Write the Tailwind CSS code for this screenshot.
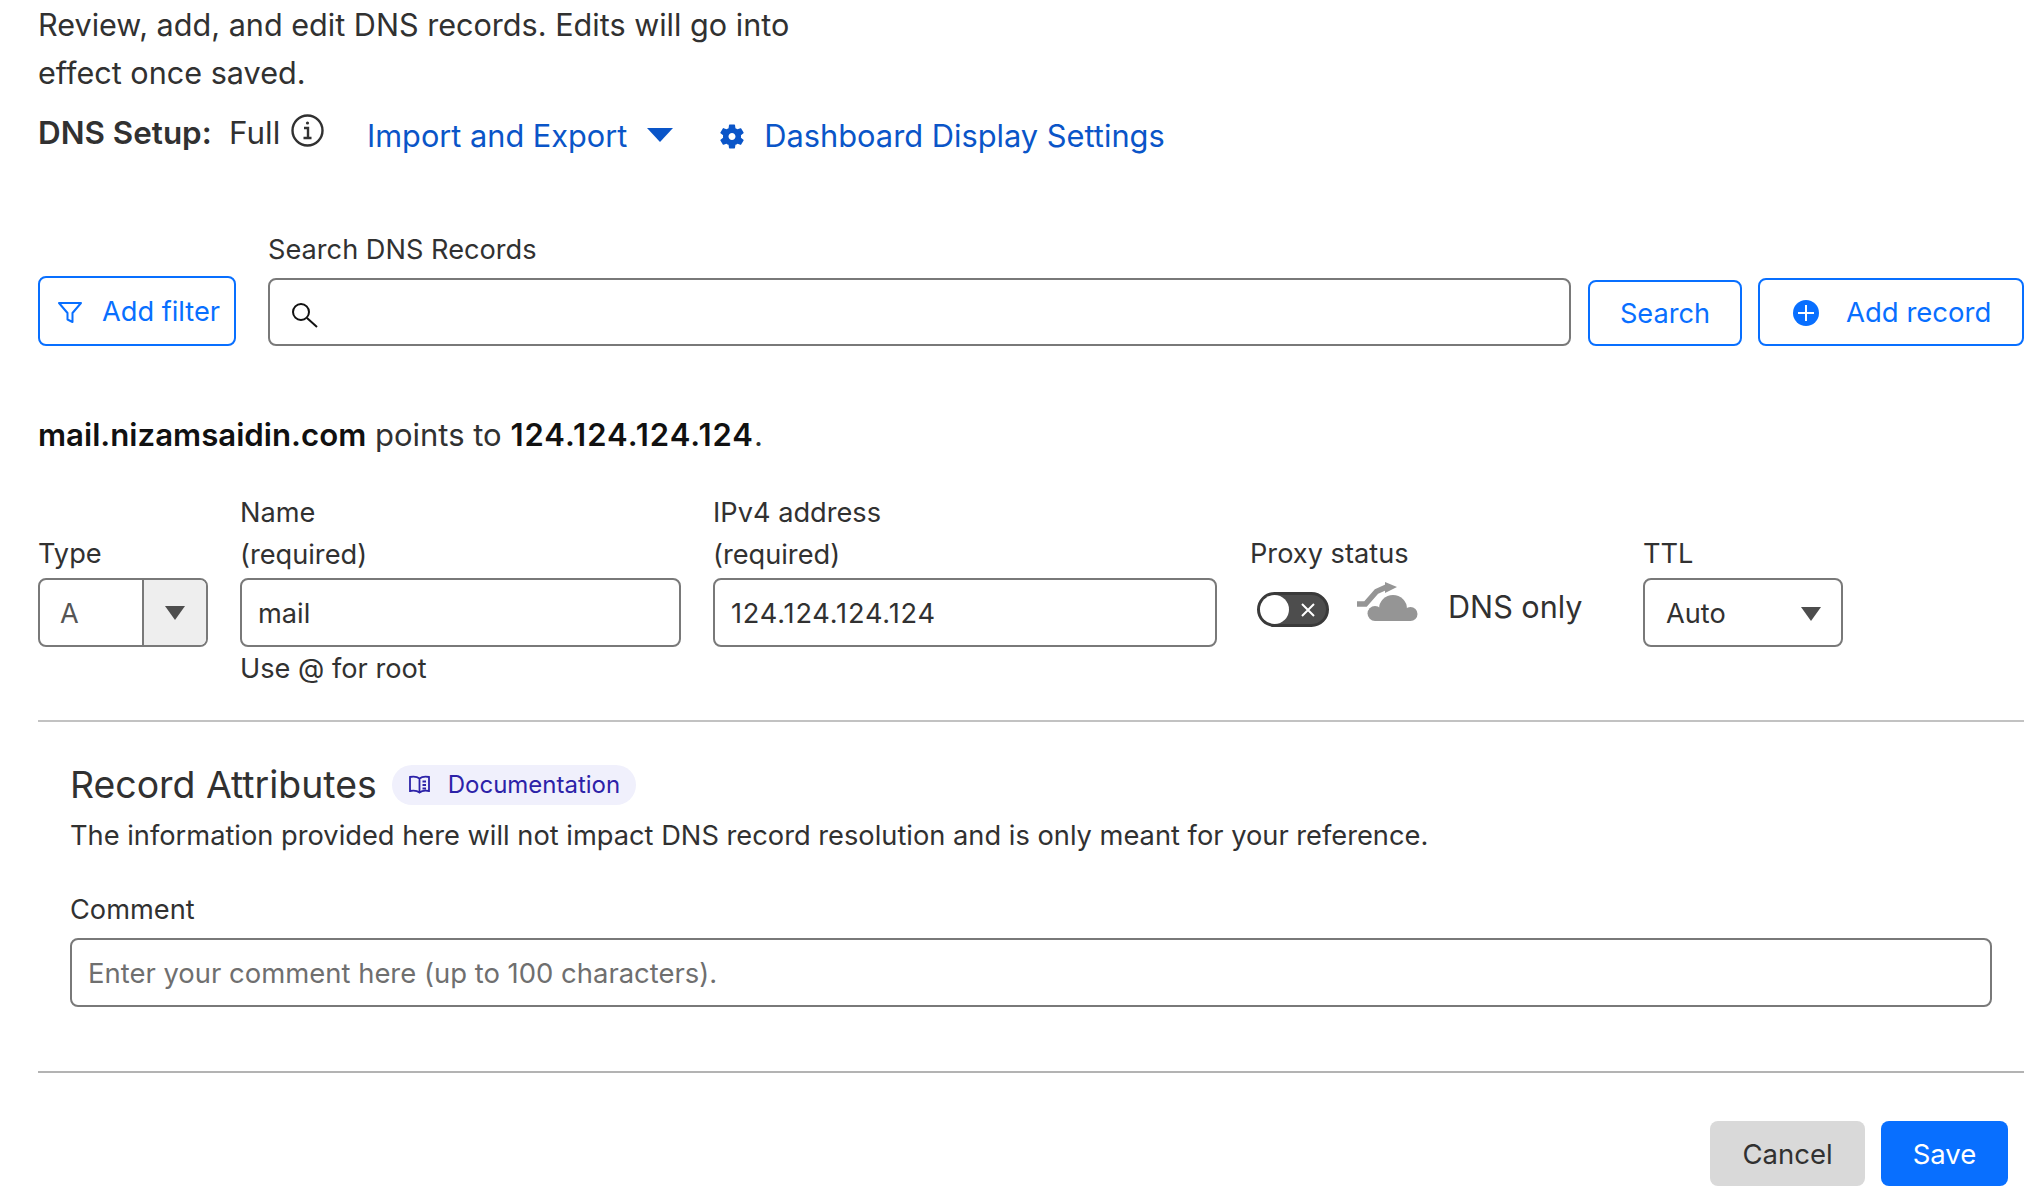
<!DOCTYPE html>
<html lang="en">
<head>
  <meta charset="UTF-8" />
  <title>DNS Records</title>
  <script src="https://cdn.jsdelivr.net/npm/@tailwindcss/browser@4"></script>
</head>
<body class="bg-white font-[Inter,sans-serif] text-[#313131] overflow-hidden">
  <main class="ml-[38px] w-[1986px] pt-px">

    <!-- Intro -->
    <p class="w-[800px] text-[30.6px] leading-[48px]">Review, add, and edit DNS records. Edits will go into<br />effect once saved.</p>

    <!-- DNS setup line -->
    <div class="mt-[11px] h-14 flex items-center">
      <span class="w-[191px] pb-1 text-[31.4px] font-semibold">DNS Setup:</span>
      <span class="w-[62px] pb-1 text-[31.4px]">Full</span>
      <svg class="w-[33px] h-[33px] mb-[12px]" viewBox="0 0 33 33" fill="none" stroke="#313131" stroke-width="2.4">
        <circle cx="16.5" cy="16.5" r="15" />
        <path d="M13 14h4v10M12.5 24h8" />
        <circle cx="16.5" cy="9" r="1.6" fill="#313131" stroke="none" />
      </svg>
      <a class="ml-[43px] text-[30.7px] text-[#0a55c8]">Import and Export</a>
      <svg class="ml-5 w-[26px] h-[14px] mb-[2px]" viewBox="0 0 26 14"><path d="M0 0h26L13 14z" fill="#0a55c8" /></svg>
      <svg class="ml-[47px] w-6 h-[25px]" viewBox="2.400 2 19.200 20" preserveAspectRatio="none" fill="#0a55c8"><path d="M19.14 12.94c.04-.3.06-.61.06-.94 0-.32-.02-.64-.07-.94l2.03-1.58c.18-.14.23-.41.12-.61l-1.92-3.32c-.12-.22-.37-.29-.59-.22l-2.39.96c-.5-.38-1.03-.7-1.62-.94l-.36-2.54c-.04-.24-.24-.41-.48-.41h-3.84c-.24 0-.43.17-.47.41l-.36 2.54c-.59.24-1.13.57-1.62.94l-2.39-.96c-.22-.08-.47 0-.59.22L2.74 8.87c-.12.21-.08.47.12.61l2.03 1.58c-.05.3-.09.63-.09.94s.02.64.07.94l-2.03 1.58c-.18.14-.23.41-.12.61l1.92 3.32c.12.22.37.29.59.22l2.39-.96c.5.38 1.03.7 1.62.94l.36 2.54c.05.24.24.41.48.41h3.84c.24 0 .44-.17.47-.41l.36-2.54c.59-.24 1.13-.56 1.62-.94l2.39.96c.22.08.47 0 .59-.22l1.92-3.32c.12-.22.07-.47-.12-.61l-2.01-1.58zM12 14.800c-1.540 0-2.800-1.260-2.800-2.800s1.260-2.800 2.800-2.800 2.800 1.260 2.800 2.800-1.260 2.800-2.800 2.800z" /></svg>
      <a class="ml-5 text-[30.8px] text-[#0a55c8]">Dashboard Display Settings</a>
    </div>

    <!-- Search row -->
    <div class="mt-[68px] flex items-end">
      <button class="w-[198px] h-[70px] flex items-center pl-[18px] pt-[3px] border-2 border-[#086fff] rounded-lg text-[27.2px] text-[#086fff]">
        <svg class="w-6 h-[22px] mr-5" viewBox="0 0 24 22" fill="none" stroke="#086fff" stroke-width="2" stroke-linejoin="round"><path d="M1 1h22l-8.500 10v9l-5-2.500v-6.500z" /></svg>
        Add filter
      </button>
      <div class="ml-8 w-[1303px]">
        <label class="block text-[27.2px] leading-9 mb-[10px]">Search DNS Records</label>
        <div class="h-[68px] flex items-center pl-[20px] border-2 border-[#797979] rounded-lg">
          <svg class="w-[28px] h-[28px] mt-[5px]" viewBox="0 0 28 28" fill="none" stroke="#111" stroke-width="2"><circle cx="11" cy="11" r="8" /><path d="M17 17l10 9" /></svg>
        </div>
      </div>
      <button class="ml-[17px] w-[154px] h-[66px] pt-[3px] border-2 border-[#086fff] rounded-lg text-[27.2px] text-[#086fff]">Search</button>
      <button class="ml-4 w-[266px] h-[68px] flex items-center pl-[33px] pt-[2px] border-2 border-[#086fff] rounded-lg text-[27.5px] text-[#086fff]">
        <svg class="w-[26px] h-[26px] mr-[27px]" viewBox="0 0 26 26"><circle cx="13" cy="13" r="13" fill="#086fff" /><path d="M13 5v16M5 13h16" stroke="#fff" stroke-width="2" /></svg>
        Add record
      </button>
    </div>

    <!-- Summary -->
    <p class="mt-[69px] text-[31px] leading-10"><strong class="text-[31.2px] font-semibold text-[#111]">mail.nizamsaidin.com</strong> points to <strong class="font-semibold text-[#111] tracking-[1px]">124.124.124.124</strong>.</p>

    <!-- Record form -->
    <div class="mt-[37px] flex items-start">
      <div class="w-[170px] pt-[41px]">
        <label class="block text-[27.2px] leading-[42px] mb-[3px]">Type</label>
        <div class="h-[69px] flex border-2 border-[#797979] rounded-lg overflow-hidden text-[27.2px]">
          <span class="w-[102px] pl-[20px] pt-[3px] flex items-center text-[#555]">A</span>
          <span class="flex-1 flex items-center justify-center bg-[#eeeeee] border-l-2 border-[#797979]">
            <svg class="w-5 h-[14px]" viewBox="0 0 20 14"><path d="M0 0h20L10 14z" fill="#4d4d4d" /></svg>
          </span>
        </div>
      </div>
      <div class="ml-8 w-[441px]">
        <label class="block text-[27.2px] leading-[41px] mb-1">Name<br /><span class="relative top-px">(required)</span></label>
        <input class="w-full h-[69px] px-[16px] pt-[2px] border-2 border-[#797979] rounded-lg text-[27.2px] text-[#313131]" value="mail" />
        <p class="mt-1 text-[27.2px] leading-9">Use @ for root</p>
      </div>
      <div class="ml-8 w-[504px]">
        <label class="block text-[27.2px] leading-[41px] mb-1">IPv4 address<br /><span class="relative top-px">(required)</span></label>
        <input class="w-full h-[69px] px-[16px] pt-[2px] border-2 border-[#797979] rounded-lg text-[27.2px] text-[#313131] tracking-[0.8px]" value="124.124.124.124" />
      </div>
      <div class="ml-[33px] w-[393px] pt-[41px]">
        <label class="block text-[27.2px] leading-[42px] mb-[3px]">Proxy status</label>
        <div class="h-[69px] flex items-start">
          <div class="ml-[7px] mt-[14px] w-[72px] h-[35px] flex items-center justify-between pl-[3px] pr-[11px] rounded-full bg-[#4d4d4d] border-[3px] border-[#3a3a3a]">
            <span class="-ml-[3px] w-[29px] h-[29px] rounded-full bg-white"></span>
            <svg class="w-[14px] h-[14px]" viewBox="0 0 14 14" stroke="#fff" stroke-width="2"><path d="M1 1l12 12M13 1L1 13" /></svg>
          </div>
          <svg class="ml-[27px] mt-1 w-[62px] h-[39px]" viewBox="0 0 62 39" fill="#959595">
            <path d="M1 22h8.500l11-12.500 10-4.500" fill="none" stroke="#959595" stroke-width="5.500" />
            <path d="M29 0l12 5-12 6z" />
            <circle cx="37" cy="27" r="14" />
            <circle cx="19" cy="31.500" r="7.500" />
            <circle cx="54.500" cy="32" r="7" />
            <rect x="19" y="28" width="36" height="11" />
          </svg>
          <span class="ml-[30px] mt-[9px] text-[30.6px] leading-10">DNS only</span>
        </div>
      </div>
      <div class="w-[200px] pt-[41px]">
        <label class="block text-[27.2px] leading-[42px] mb-[3px]">TTL</label>
        <div class="h-[69px] flex items-center justify-between pl-[21px] pr-[20px] pt-[3px] border-2 border-[#797979] rounded-lg text-[27.2px]">
          Auto
          <svg class="w-5 h-[14px]" viewBox="0 0 20 14"><path d="M0 0h20L10 14z" fill="#4d4d4d" /></svg>
        </div>
      </div>
    </div>

    <hr class="mt-[33px] border-t-2 border-[#c2c2c2]" />

    <!-- Record attributes -->
    <section class="pl-8">
      <div class="mt-[38px] flex items-center h-[50px]">
        <h2 class="text-[37.4px] leading-[50px] font-normal">Record Attributes</h2>
        <a class="ml-[15px] h-10 flex items-center pl-[17px] pr-4 rounded-full bg-[#f0f0fc] text-[24px] text-[#2c22a8]">
          <svg class="w-[21px] h-[20px] mr-[18px]" viewBox="0 0 21 20" fill="none" stroke="#2c22a8" stroke-width="1.800"><path d="M10.500 3.500C8 1.500 4 1.500 1 2v14c3-.5 7-.5 9.500 1.500 2.500-2 6.500-2 9.500-1.500V2c-3-.5-7-.5-9.500 1.500zM10.500 3.500v14M13.500 6.500h3.500M13.500 10h3.500M13.500 13.500h3.500" /></svg>
          Documentation
        </a>
      </div>
      <p class="mt-[6px] text-[27.25px] leading-10">The information provided here will not impact DNS record resolution and is only meant for your reference.</p>
      <label class="block mt-9 text-[27.2px] leading-9">Comment</label>
      <input class="mt-[10px] block w-[1922px] h-[69px] px-[16px] pt-px border-2 border-[#797979] rounded-lg text-[27.45px] placeholder:text-[#6f6f6f]" placeholder="Enter your comment here (up to 100 characters)." />
    </section>

    <hr class="mt-16 border-t-2 border-[#b3b3b3]" />

    <!-- Actions -->
    <div class="mt-12 pr-4 flex justify-end gap-4">
      <button class="w-[155px] h-[65px] pt-[2px] rounded-lg bg-[#d9d9d9] text-[27.5px]">Cancel</button>
      <button class="w-[127px] h-[65px] pt-[2px] rounded-lg bg-[#086fff] text-[27.5px] text-white">Save</button>
    </div>
  </main>
</body>
</html>
